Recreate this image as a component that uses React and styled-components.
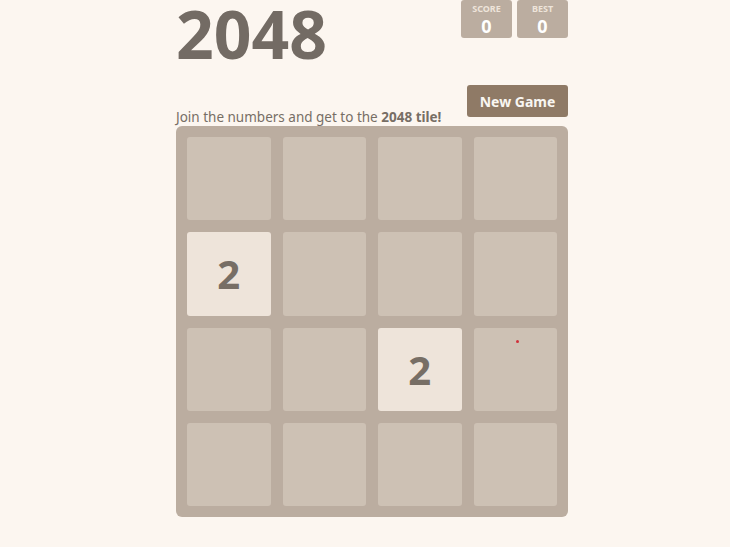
import React from 'react';
import styled, { createGlobalStyle } from 'styled-components';

const GlobalStyle = createGlobalStyle`
  html, body {
    margin: 0;
    padding: 0;
    background: #fcf6f0;
    font-family: "Noto Sans", "Open Sans", sans-serif;
    color: #776e65;
  }
`;

const Page = styled.div`
  padding-left: 14px;
`;

const Container = styled.div`
  width: 392px;
  margin: 0 auto;
`;

const Heading = styled.div`
  display: flex;
  justify-content: space-between;
  align-items: flex-start;
  height: 66px;
`;

const Title = styled.h1`
  margin: -12px 0 0;
  font-size: 66px;
  line-height: 90px;
  font-weight: 700;
  color: #736b64;
`;

const Scores = styled.div`
  display: flex;
  gap: 5px;
`;

const ScoreBox = styled.div`
  width: 51px;
  height: 38px;
  background: #bbada0;
  border-radius: 3px;
  display: flex;
  flex-direction: column;
  align-items: center;
  box-sizing: border-box;
  padding-top: 2px;
`;

const ScoreLabel = styled.span`
  font-size: 9px;
  line-height: 13px;
  font-weight: 700;
  color: #eee4da;
  text-transform: uppercase;
`;

const ScoreValue = styled.span`
  font-size: 18px;
  line-height: 23px;
  font-weight: 700;
  color: #fff;
`;

const AboveGame = styled.div`
  display: flex;
  justify-content: space-between;
  height: 41px;
  margin-top: 19px;
`;

const Intro = styled.p`
  margin: 0;
  align-self: flex-end;
  font-size: 13.5px;
  line-height: 19px;
  margin-bottom: -1px;
  color: #776e65;

  strong {
    font-weight: 700;
  }
`;

const NewGame = styled.button`
  align-self: flex-start;
  width: 101px;
  height: 32px;
  border: none;
  border-radius: 3px;
  background: #8f7a66;
  color: #f9f6f2;
  font-family: inherit;
  font-size: 14px;
  font-weight: 700;
  cursor: pointer;
`;

const Board = styled.div`
  position: relative;
  box-sizing: border-box;
  width: 392px;
  height: 391px;
  padding: 11px;
  background: #bbada0;
  border-radius: 6px;
  display: grid;
  grid-template-columns: repeat(4, 1fr);
  grid-template-rows: repeat(4, 1fr);
  gap: 12px 12px;
`;

const Tile = styled.div`
  border-radius: 3px;
  background: ${({ value }) => (value ? '#eee4da' : '#cdc1b4')};
  color: #776e65;
  display: flex;
  align-items: center;
  justify-content: center;
  font-size: 40px;
  font-weight: 700;
`;

const Cursor = styled.span`
  position: absolute;
  left: 340px;
  top: 214px;
  width: 3px;
  height: 3px;
  border-radius: 50%;
  background: #d0303a;
`;

const cells = [
  0, 0, 0, 0,
  2, 0, 0, 0,
  0, 0, 2, 0,
  0, 0, 0, 0,
];

export default function App() {
  return (
    <Page>
      <GlobalStyle />
      <Container>
        <Heading>
          <Title>2048</Title>
          <Scores>
            <ScoreBox>
              <ScoreLabel>Score</ScoreLabel>
              <ScoreValue>0</ScoreValue>
            </ScoreBox>
            <ScoreBox>
              <ScoreLabel>Best</ScoreLabel>
              <ScoreValue>0</ScoreValue>
            </ScoreBox>
          </Scores>
        </Heading>
        <AboveGame>
          <Intro>
            Join the numbers and get to the <strong>2048 tile!</strong>
          </Intro>
          <NewGame>New Game</NewGame>
        </AboveGame>
        <Board>
          {cells.map((v, i) => (
            <Tile key={i} value={v}>{v ? v : null}</Tile>
          ))}
          <Cursor />
        </Board>
      </Container>
    </Page>
  );
}
